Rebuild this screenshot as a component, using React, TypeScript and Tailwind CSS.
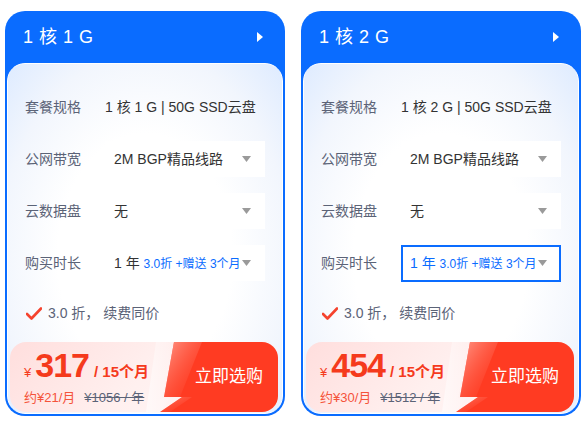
import React from "react";

type Card = {
  title: string;
  spec: string;
  price: string;
  monthly: string;
  original: string;
  selected: boolean;
};

const cards: Card[] = [
  { title: "1 核 1 G", spec: "1 核 1 G | 50G SSD云盘", price: "317", monthly: "约¥21/月", original: "¥1056 / 年", selected: false },
  { title: "1 核 2 G", spec: "1 核 2 G | 50G SSD云盘", price: "454", monthly: "约¥30/月", original: "¥1512 / 年", selected: true },
];

const font = { fontFamily: '"Liberation Sans", "Noto Sans CJK SC", sans-serif' };

function Caret() {
  return (
    <svg width="9" height="6" viewBox="0 0 9 6" className="shrink-0">
      <path d="M0 0 L9 0 L4.5 6 Z" fill="#9a9a9a" />
    </svg>
  );
}

function Select({ children, selected }: { children: React.ReactNode; selected?: boolean }) {
  return (
    <div
      className={
        selected
          ? "w-[160px] h-[37px] bg-white border-2 border-[#0a6cff] flex items-center justify-between pl-[7px] pr-[12px]"
          : "w-[160px] h-[36px] bg-white flex items-center justify-between pl-[9px] pr-[14px]"
      }
    >
      <div className="text-[14px] text-[#333] whitespace-nowrap">{children}</div>
      <Caret />
    </div>
  );
}

function Row({ label, children }: { label: string; children: React.ReactNode }) {
  return (
    <div className="flex items-center h-[36px]">
      <div className="w-[80px] text-[14px] text-[#5b6377]">{label}</div>
      {children}
    </div>
  );
}

function PriceCard({ c }: { c: Card }) {
  return (
    <div className="w-[280px] h-[405px] rounded-[20px] bg-[#0a6cff] flex flex-col px-[2px] pb-[2px]">
      <div className="h-[52px] flex items-center justify-between pl-[16px] pr-[20px] text-white">
        <div className="text-[18px] tracking-[0.5px]">{c.title}</div>
        <svg width="6" height="10" viewBox="0 0 6 10">
          <path d="M0 0 L6 5 L0 10 Z" fill="#fff" />
        </svg>
      </div>
      <div className="flex-1 rounded-[18px] border border-white bg-[radial-gradient(ellipse_at_50%_55%,#ffffff_45%,#f2f6fd_75%,#deebff_100%)] flex flex-col pt-[25px]">
        <div className="flex flex-col gap-[16px] pl-[17px]">
          <Row label="套餐规格">
            <div className="text-[14px] text-[#333] whitespace-nowrap">{c.spec}</div>
          </Row>
          <Row label="公网带宽">
            <Select>2M BGP精品线路</Select>
          </Row>
          <Row label="云数据盘">
            <Select>无</Select>
          </Row>
          <Row label="购买时长">
            <Select selected={c.selected}>
              <span className={c.selected ? "text-[#0a6cff]" : "text-[#333]"}>1 年 </span>
              <span className="text-[12px] text-[#0a6cff]">3.0折 +赠送 3个月</span>
            </Select>
          </Row>
        </div>
        <div className="flex items-center gap-[6px] pl-[18px] mt-[22px] h-[20px]">
          <svg width="16" height="13" viewBox="0 0 16 13">
            <path d="M1 7 L5.5 11.5 L15 1.5" fill="none" stroke="#f5432e" strokeWidth="2.6" strokeLinecap="round" strokeLinejoin="round" />
          </svg>
          <div className="text-[14px] text-[#5b6377]">3.0 折， 续费同价</div>
        </div>
        <div className="mt-auto mb-[1px] ml-[2px] w-[268px] h-[70px] rounded-[16px] relative overflow-hidden flex bg-[linear-gradient(135deg,#ffdedd_0%,#fff0ef_50%,#fff8f8_100%)]">
          <svg className="absolute inset-0" width="268" height="70" viewBox="0 0 268 70">
            <defs>
              <linearGradient id="hl" x1="0" y1="0" x2="1" y2="0">
                <stop offset="0" stopColor="#ffffff" stopOpacity="0.9" />
                <stop offset="1" stopColor="#ffffff" stopOpacity="0" />
              </linearGradient>
              <linearGradient id="hl2" x1="0" y1="0" x2="1" y2="1">
                <stop offset="0" stopColor="#ffb3a6" stopOpacity="0.8" />
                <stop offset="1" stopColor="#ff3b22" stopOpacity="0" />
              </linearGradient>
            </defs>
            <path d="M146 0 L164 0 L152 56 L160 56 L150 70 L136 70 Z" fill="url(#hl)" opacity="0.6" />
            <path d="M164 0 L268 0 L268 70 L150 70 L172 55 L154 55 Z" fill="#ff3b22" />
            <path d="M164 0 L192 0 L170 55 L154 55 Z" fill="url(#hl2)" />
            <path d="M172 55 L182 55 L160 70 L150 70 Z" fill="url(#hl2)" opacity="0.7" />
          </svg>
          <div className="relative flex-1 flex flex-col pl-[14px] pt-[3px]">
            <div className="flex items-baseline text-[#f53a1c] font-bold h-[40px]">
              <span className="text-[13px] font-normal mr-[4px]">¥</span>
              <span className="text-[34px] tracking-[-1px] leading-[40px]">{c.price}</span>
              <span className="text-[15px] ml-[5px]">/ 15个月</span>
            </div>
            <div className="flex items-center gap-[9px] mt-[3px] text-[13px]">
              <span className="text-[#f5533a]">{c.monthly}</span>
              <span className="text-[#5b6377] line-through">{c.original}</span>
            </div>
          </div>
          <div className="relative w-[98px] flex items-center justify-center text-white text-[17px] pb-[1px]">
            立即选购
          </div>
        </div>
      </div>
    </div>
  );
}

export default function App() {
  return (
    <div className="w-[586px] h-[421px] bg-white flex gap-[16px] pl-[5px] pt-[11px]" style={font}>
      {cards.map((c) => (
        <PriceCard key={c.title} c={c} />
      ))}
    </div>
  );
}
